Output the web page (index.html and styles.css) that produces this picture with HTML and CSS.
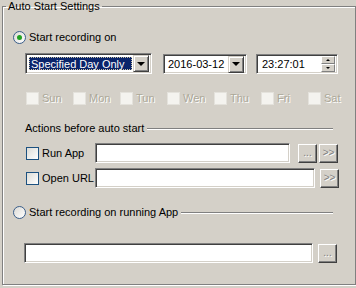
FILE: index.html
```html
<!DOCTYPE html>
<html lang="en">
<head>
  <meta charset="UTF-8">
  <title>Auto Start Settings</title>
  <link rel="stylesheet" href="styles.css">
</head>
<body>
  <fieldset class="group">
    <legend>Auto Start Settings</legend>

    <div class="radio-row first">
      <span class="radio checked"></span>
      <span>Start recording on</span>
    </div>

    <div class="pickers">
      <div class="combo">
        <span class="combo-value"><span class="focus">Specified Day Only</span></span>
        <span class="drop-btn"><span class="arrow"></span></span>
      </div>
      <div class="date">
        <span class="field-text">2016-03-12</span>
        <span class="drop-btn"><span class="arrow"></span></span>
      </div>
      <div class="time">
        <span class="field-text">23:27:01</span>
        <span class="spinner">
          <span class="spin-btn"><span class="arrow-up"></span></span>
          <span class="spin-btn"><span class="arrow-down"></span></span>
        </span>
      </div>
    </div>

    <div class="days">
      <span class="day"><span class="check disabled"></span>Sun</span>
      <span class="day"><span class="check disabled"></span>Mon</span>
      <span class="day"><span class="check disabled"></span>Tun</span>
      <span class="day"><span class="check disabled"></span>Wen</span>
      <span class="day"><span class="check disabled"></span>Thu</span>
      <span class="day"><span class="check disabled"></span>Fri</span>
      <span class="day"><span class="check disabled"></span>Sat</span>
    </div>

    <div class="section-title">
      <span>Actions before auto start</span>
      <span class="rule"></span>
    </div>

    <div class="action-row run-app">
      <span class="check"></span>
      <span class="action-label">Run App</span>
      <span class="textbox app-box"></span>
      <span class="small-btn browse">...</span>
      <span class="small-btn">&gt;&gt;</span>
    </div>

    <div class="action-row open-url">
      <span class="check"></span>
      <span class="action-label">Open URL</span>
      <span class="textbox url-box"></span>
      <span class="small-btn">&gt;&gt;</span>
    </div>

    <div class="radio-row second">
      <span class="radio"></span>
      <span>Start recording on running App</span>
      <span class="rule"></span>
    </div>

    <div class="app-path">
      <span class="textbox path-box"></span>
      <span class="small-btn browse">...</span>
    </div>
  </fieldset>
</body>
</html>
```

FILE: styles.css
```css
body {
  margin: 0;
  padding: 0 2px;
  width: 356px;
  height: 288px;
  box-sizing: border-box;
  background-color: #d4d0c8;
  font-family: "Liberation Sans", Arial, sans-serif;
  font-size: 11px;
  color: #000;
  overflow: hidden;
}
.group {
  margin: 0;
  padding: 0;
  height: 285px;
  box-sizing: border-box;
  border: 1px solid #808080;
  box-shadow: inset 1px 1px 0 #fff, 1px 1px 0 #fff;
}
.group legend {
  margin-left: 3px;
  padding: 0 2px;
  line-height: 13px;
  font-size: 11px;
}

/* radio rows */
.radio-row {
  display: flex;
  align-items: center;
  height: 14px;
  padding-left: 10px;
}
.radio-row.first {
  margin-top: 17px;
}
.radio-row.second {
  margin-top: 17px;
  padding-right: 22px;
}
.radio {
  width: 11px;
  height: 11px;
  border: 1px solid #3a5e8a;
  border-radius: 50%;
  background: linear-gradient(135deg, #dcdad5, #fff);
  margin-right: 3px;
  display: flex;
  align-items: center;
  justify-content: center;
  flex: none;
}
.radio.checked::after {
  content: "";
  width: 5px;
  height: 5px;
  border-radius: 50%;
  background: #21a121;
}
.rule {
  flex: 1;
  height: 1px;
  margin-left: 3px;
  background: #808080;
  box-shadow: 0 1px 0 #fff;
}

/* pickers */
.pickers {
  display: flex;
  margin-top: 9px;
  padding-left: 22px;
  height: 21px;
}
.combo,
.date,
.time,
.textbox {
  box-sizing: border-box;
  background: #fff;
  border: 1px solid;
  border-color: #808080 #fff #fff #808080;
  box-shadow: inset 1px 1px 0 #404040, inset -1px -1px 0 #d4d0c8;
  display: flex;
  align-items: center;
}
.combo {
  width: 127px;
  height: 21px;
  padding: 2px;
}
.combo-value {
  flex: 1;
  height: 100%;
  padding: 1px;
  box-sizing: border-box;
}
.focus {
  display: block;
  height: 100%;
  box-sizing: border-box;
  background: #0a246a;
  color: #fff;
  outline: 1px dotted #c9c0a0;
  outline-offset: -1px;
  padding-left: 2px;
  line-height: 15px;
}
.drop-btn {
  width: 16px;
  height: 17px;
  box-sizing: border-box;
  background: #d4d0c8;
  border: 1px solid;
  border-color: #d4d0c8 #404040 #404040 #d4d0c8;
  box-shadow: inset 1px 1px 0 #fff, inset -1px -1px 0 #808080;
  display: flex;
  align-items: center;
  justify-content: center;
  flex: none;
}
.arrow {
  width: 0;
  height: 0;
  border-left: 4px solid transparent;
  border-right: 4px solid transparent;
  border-top: 4px solid #000;
}
.date {
  width: 84px;
  height: 20px;
  margin-left: 11px;
  margin-top: 1px;
  padding: 2px 2px 2px 4px;
}
.time {
  width: 82px;
  height: 20px;
  margin-left: 9px;
  margin-top: 1px;
  padding: 2px 2px 2px 5px;
}
.field-text {
  flex: 1;
}
.spinner {
  display: flex;
  flex-direction: column;
  width: 14px;
  height: 16px;
}
.spin-btn {
  flex: 1;
  box-sizing: border-box;
  background: #d4d0c8;
  border: 1px solid;
  border-color: #fff #808080 #808080 #fff;
  display: flex;
  align-items: center;
  justify-content: center;
}
.arrow-up,
.arrow-down {
  width: 0;
  height: 0;
  border-left: 2px solid transparent;
  border-right: 2px solid transparent;
}
.arrow-up {
  border-bottom: 2px solid #000;
}
.arrow-down {
  border-top: 2px solid #000;
}

/* week days */
.days {
  display: grid;
  grid-template-columns: repeat(7, 47px);
  margin-top: 17px;
  padding-left: 23px;
  height: 14px;
}
.day {
  display: flex;
  align-items: center;
  color: #aca899;
  text-shadow: 1px 1px 0 #fff;
}
.check {
  width: 11px;
  height: 11px;
  border: 1px solid #1c5180;
  background: linear-gradient(135deg, #dcdcd7, #fff);
  flex: none;
  margin-right: 3px;
}
.check.disabled {
  border-color: #e4e2dc;
  background: #f4f3ef;
}

/* actions */
.section-title {
  display: flex;
  align-items: center;
  height: 14px;
  margin-top: 16px;
  padding-left: 22px;
  padding-right: 22px;
}
.action-row {
  display: flex;
  align-items: center;
  height: 20px;
  padding-left: 23px;
}
.action-row.run-app {
  margin-top: 8px;
}
.action-row.open-url {
  margin-top: 5px;
}
.action-label {
  width: 53px;
}
.textbox {
  height: 20px;
}
.app-box {
  width: 195px;
}
.url-box {
  width: 220px;
}
.small-btn {
  width: 19px;
  height: 19px;
  box-sizing: border-box;
  background: #d4d0c8;
  border: 1px solid;
  border-color: #fff #404040 #404040 #fff;
  box-shadow: inset -1px -1px 0 #808080;
  color: #808080;
  text-shadow: 1px 1px 0 #fff;
  font-size: 10px;
  line-height: 16px;
  text-align: center;
  margin-left: 5px;
  flex: none;
}
.small-btn.browse {
  margin-left: 8px;
  margin-right: -3px;
}
.app-path {
  display: flex;
  align-items: center;
  margin-top: 24px;
  padding-left: 21px;
}
.path-box {
  width: 289px;
}
.app-path .small-btn.browse {
  margin-left: 5px;
  margin-right: 0;
}
```
